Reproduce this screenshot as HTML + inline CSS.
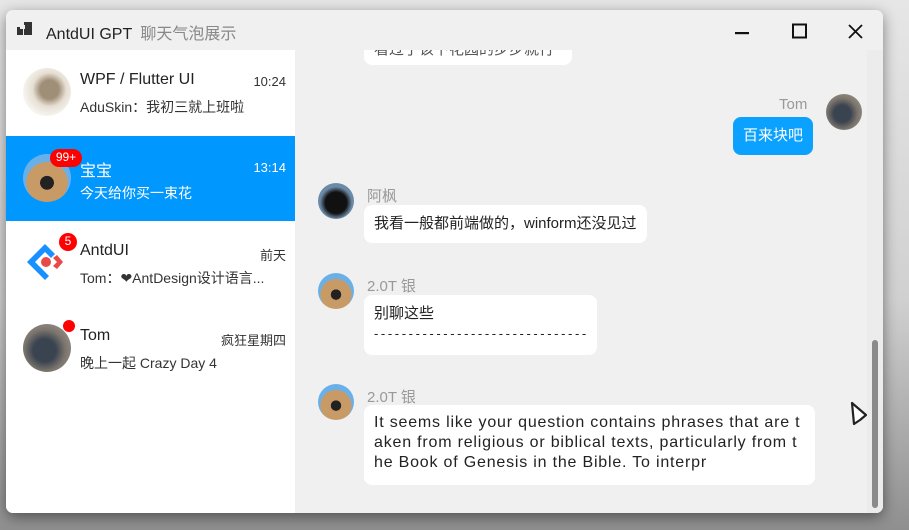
<!DOCTYPE html>
<html><head><meta charset="utf-8"><style>
*{margin:0;padding:0;box-sizing:border-box}
body{width:909px;height:530px;overflow:hidden;position:relative;background:linear-gradient(#e6e6e6 0,#d0d0d0 300px,#8f8f8f 530px);font-family:"Liberation Sans","Noto Sans CJK SC",sans-serif}
.win{position:absolute;left:6px;top:10px;width:877px;height:503px;border-radius:7px;background:#f0f0f0;overflow:hidden;box-shadow:0 4px 14px rgba(0,0,0,.45)}
.title{position:absolute;left:0;top:0;width:100%;height:40px;background:#f0f0f0}
.title .t{position:absolute;left:40px;top:10px;font-size:16px;color:#222}
.title .t span{color:#888;margin-left:4px}
.list{position:absolute;left:0;top:40px;width:289px;height:463px;background:#fff}
.item{position:absolute;left:0;width:289px;height:85px}
.av{position:absolute;left:17px;top:18px;width:48px;height:48px;border-radius:50%}
.nm{position:absolute;left:74px;top:21px;font-size:16px;color:#222}
.tm{position:absolute;right:9px;top:24px;font-size:13px;color:#333}
.ms{position:absolute;left:74px;top:47px;font-size:14px;color:#333;white-space:nowrap}
.sel{background:#0097ff}
.sel .nm,.sel .tm,.sel .ms{color:#fff}
.badge{position:absolute;background:#f00;color:#fff;font-size:12px;border-radius:9px;text-align:center;line-height:17px;height:18px}
.chat{position:absolute;left:289px;top:40px;width:588px;height:463px;background:#f0f0f0;overflow:hidden}
.bub{position:absolute;background:#fff;border-radius:8px;font-size:15px;color:#222;padding:9px 10px;line-height:20px;white-space:nowrap}
.who{position:absolute;font-size:15px;color:#999}
.cav{position:absolute;width:36px;height:36px;border-radius:50%}
.dog{background:radial-gradient(circle at 50% 60%,#222 0 18%,#c89a66 19% 55%,#6ab0e8 56%)}
</style></head><body>
<div class="win">
 <div class="title">
  <svg style="position:absolute;left:11px;top:12px" width="16" height="14"><rect x="0" y="5" width="6" height="8" fill="#333"/><rect x="7" y="0" width="8" height="13" fill="#333"/><rect x="3" y="3" width="5" height="4" fill="#f0f0f0"/></svg>
  <div class="t">AntdUI GPT <span>聊天气泡展示</span></div>
  <svg style="position:absolute;left:726px;top:12px" width="140" height="20"><rect x="3" y="10" width="14" height="2.2" fill="#111"/><rect x="61" y="2.5" width="13" height="13" fill="none" stroke="#111" stroke-width="2"/><path d="M117 3L130 16M130 3L117 16" stroke="#111" stroke-width="1.8"/></svg>
 </div>
 <div class="list">
  <div class="item" style="top:0">
   <div class="av" style="background:radial-gradient(ellipse at 55% 45%,#a08f78 0 25%,#e6ded2 45%,#f6f4f0 70%)"></div>
   <div class="nm">WPF / Flutter UI</div><div class="tm">10:24</div>
   <div class="ms">AduSkin：我初三就上班啦</div>
  </div>
  <div class="item sel" style="top:86px">
   <div class="av dog"></div>
   <div class="badge" style="left:44px;top:13px;width:32px">99+</div>
   <div class="nm">宝宝</div><div class="tm">13:14</div>
   <div class="ms">今天给你买一束花</div>
  </div>
  <div class="item" style="top:171px">
   <svg class="av" style="border-radius:0" viewBox="0 0 48 48"><path d="M22 5L4 23L22 41L26 37L12 23L22 13L28 19L32 15Z" fill="#1890ff"/><path d="M34 16L40 23L34 30L30 27L34 23L30 19Z" fill="#e84a4a"/><circle cx="23" cy="23" r="5" fill="#e84a4a"/></svg>
   <div class="badge" style="left:53px;top:12px;width:18px">5</div>
   <div class="nm">AntdUI</div><div class="tm">前天</div>
   <div class="ms">Tom：❤AntDesign设计语言...</div>
  </div>
  <div class="item" style="top:256px">
   <div class="av" style="background:radial-gradient(circle at 45% 55%,#3a4350 0 30%,#7a746c 55%,#a8a299)"></div>
   <div class="badge" style="left:57px;top:14px;width:12px;height:12px;border-radius:50%"></div>
   <div class="nm">Tom</div><div class="tm">疯狂星期四</div>
   <div class="ms">晚上一起 Crazy Day 4</div>
  </div>
 </div>
 <div class="chat">
  <div class="bub" style="left:69px;top:-24px;width:208px;height:39px;color:#555;padding-top:14px">看过了该下花园的步步就行</div>
  <div class="who" style="left:484px;top:46px">Tom</div>
  <div class="cav" style="left:531px;top:44px;background:radial-gradient(circle at 45% 55%,#3a4350 0 30%,#7a746c 55%,#a8a299)"></div>
  <div class="bub" style="left:438px;top:67px;background:#0aa1ff;color:#fff">百来块吧</div>
  <div class="cav" style="left:23px;top:133px;background:radial-gradient(circle at 50% 55%,#111 0 40%,#6c8aa8 60%)"></div>
  <div class="who" style="left:72px;top:135px">阿枫</div>
  <div class="bub" style="left:69px;top:155px">我看一般都前端做的，winform还没见过</div>
  <div class="cav dog" style="left:23px;top:223px"></div>
  <div class="who" style="left:72px;top:225px">2.0T 银</div>
  <div class="bub" style="left:69px;top:245px;width:233px;height:60px">别聊这些<br><span style="font-size:13px;letter-spacing:2.6px">-------------------------------</span></div>
  <div class="cav dog" style="left:23px;top:334px"></div>
  <div class="who" style="left:72px;top:336px">2.0T 银</div>
  <div class="bub" style="left:69px;top:355px;width:451px;height:80px;font-size:16px;padding-top:8px;letter-spacing:0.8px">It seems like your question contains phrases that are t<br>aken from religious or biblical texts, particularly from t<br>he Book of Genesis in the Bible. To interpr</div>
  <svg style="position:absolute;left:553px;top:350px" width="22" height="28"><path d="M4 3L18 15L12 20L6 24Z" fill="#fff" stroke="#222" stroke-width="2.2" stroke-linejoin="round"/></svg>
  <div style="position:absolute;left:572px;top:0;width:16px;height:463px;background:#ececec"></div>
  <div style="position:absolute;left:577px;top:290px;width:6px;height:168px;border-radius:3px;background:#8a8a8a"></div>
 </div>
</div>
</body></html>
